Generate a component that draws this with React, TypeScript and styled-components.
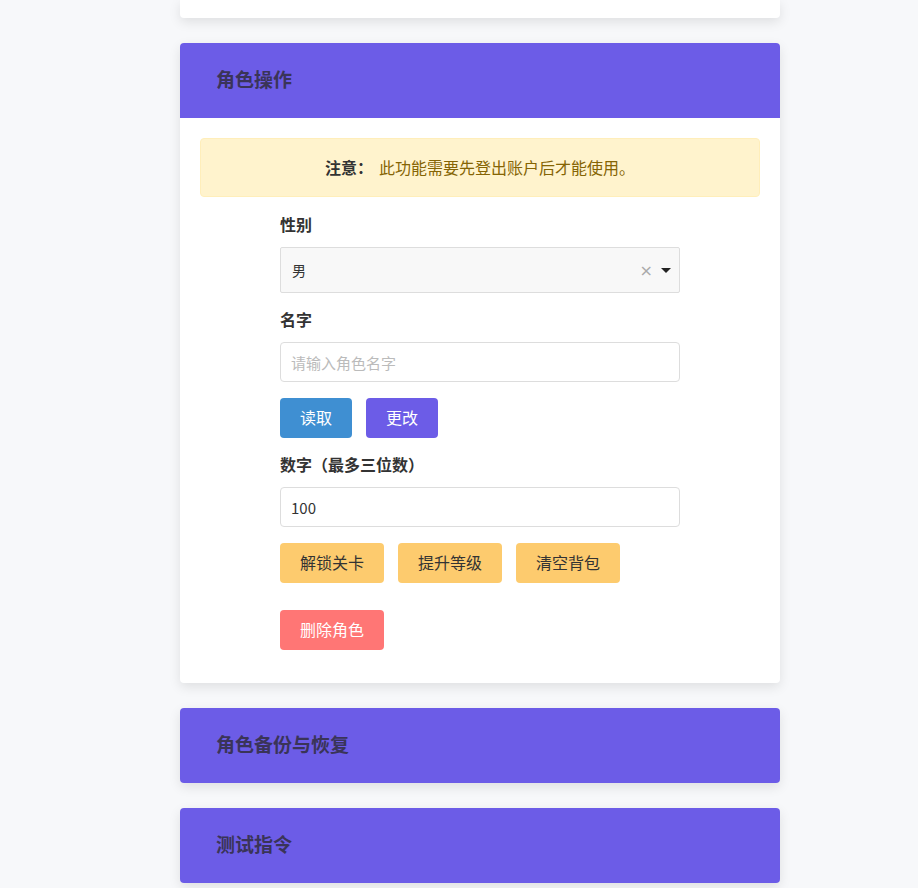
import styled, { createGlobalStyle } from 'styled-components';

const GlobalStyle = createGlobalStyle`
  body {
    margin: 0;
    background-color: #f7f8fa;
    font-family: "Microsoft YaHei", "Noto Sans CJK SC", "Noto Sans", sans-serif;
    color: #333;
  }
`;

const Page = styled.div`
  width: 600px;
  margin-left: 180px;
  display: flex;
  flex-direction: column;
  gap: 25px;
  padding-bottom: 40px;
`;

const Card = styled.section`
  background-color: white;
  border-radius: 4px;
  box-shadow: 0 4px 12px rgba(0, 0, 0, 0.1);
  overflow: hidden;
`;

const CardTail = styled.div`
  height: 18px;
  background-color: white;
  border-radius: 0 0 4px 4px;
  box-shadow: 0 4px 12px rgba(0, 0, 0, 0.1);
`;

const CardHeader = styled.div`
  background-color: #6c5ce7;
  height: 75px;
  box-sizing: border-box;
  display: flex;
  align-items: center;
  padding: 0 36px 4px;
`;

const CardTitle = styled.h2`
  margin: 0;
  font-size: 19px;
  font-weight: bold;
  color: #3a3458;
`;

const CardBody = styled.div`
  padding: 20px 20px 33px;
`;

const Alert = styled.div`
  background-color: #fff3cd;
  border: 1px solid #ffeeba;
  border-radius: 4px;
  height: 59px;
  box-sizing: border-box;
  display: flex;
  align-items: center;
  justify-content: center;
  font-size: 16px;
  color: #856404;
  margin-bottom: 17px;
  padding-bottom: 2px;

  strong {
    color: #333;
    margin-right: 6px;
  }
`;

const Form = styled.div`
  width: 400px;
  margin: 0 auto;
`;

const Label = styled.label`
  display: block;
  font-size: 16px;
  font-weight: bold;
  line-height: 20px;
  margin: 0 0 13px;
`;

const Group = styled.div`
  margin-bottom: 16px;
`;

const SelectBox = styled.div`
  height: 46px;
  box-sizing: border-box;
  border: 1px solid #ddd;
  border-radius: 2px;
  background-color: #f8f8f8;
  display: flex;
  align-items: center;
  padding: 0 8px 0 11px;
  font-size: 14px;
  color: #333;
`;

const SelectValue = styled.span`
  flex: 1;
`;

const Clear = styled.span`
  color: #aaa;
  font-size: 16px;
  font-family: "DejaVu Sans", sans-serif;
  margin-right: 8px;
`;

const Caret = styled.span`
  width: 0;
  height: 0;
  border-left: 5px solid transparent;
  border-right: 5px solid transparent;
  border-top: 5px solid #222;
`;

const Input = styled.input`
  display: block;
  width: 100%;
  height: 40px;
  box-sizing: border-box;
  border: 1px solid #ddd;
  border-radius: 4px;
  padding: 0 10px;
  font-size: 15px;
  font-family: inherit;
  color: #333;

  &::placeholder {
    color: #bbb;
  }
`;

const ButtonRow = styled.div<{ $mb?: number }>`
  display: flex;
  gap: 14px;
  margin-bottom: ${(p) => p.$mb ?? 16}px;
`;

const colors = {
  blue: ['#3f8fd2', '#fff'],
  purple: ['#6c5ce7', '#fff'],
  yellow: ['#fdcb6e', '#333'],
  red: ['#ff7675', '#fff'],
} as const;

const Button = styled.button<{ $kind: keyof typeof colors }>`
  height: 40px;
  padding: 0 20px 2px;
  border: none;
  border-radius: 4px;
  font-size: 16px;
  font-family: inherit;
  background-color: ${(p) => colors[p.$kind][0]};
  color: ${(p) => colors[p.$kind][1]};
  cursor: pointer;
`;

export default function App() {
  return (
    <>
      <GlobalStyle />
      <Page>
        <CardTail />
        <Card>
          <CardHeader>
            <CardTitle>角色操作</CardTitle>
          </CardHeader>
          <CardBody>
            <Alert>
              <strong>注意：</strong>此功能需要先登出账户后才能使用。
            </Alert>
            <Form>
              <Group>
                <Label>性别</Label>
                <SelectBox>
                  <SelectValue>男</SelectValue>
                  <Clear>×</Clear>
                  <Caret />
                </SelectBox>
              </Group>
              <Group>
                <Label>名字</Label>
                <Input placeholder="请输入角色名字" />
              </Group>
              <ButtonRow>
                <Button $kind="blue">读取</Button>
                <Button $kind="purple">更改</Button>
              </ButtonRow>
              <Group>
                <Label>数字（最多三位数）</Label>
                <Input defaultValue="100" />
              </Group>
              <ButtonRow $mb={27}>
                <Button $kind="yellow">解锁关卡</Button>
                <Button $kind="yellow">提升等级</Button>
                <Button $kind="yellow">清空背包</Button>
              </ButtonRow>
              <ButtonRow $mb={0}>
                <Button $kind="red">删除角色</Button>
              </ButtonRow>
            </Form>
          </CardBody>
        </Card>
        <Card>
          <CardHeader>
            <CardTitle>角色备份与恢复</CardTitle>
          </CardHeader>
        </Card>
        <Card>
          <CardHeader>
            <CardTitle>测试指令</CardTitle>
          </CardHeader>
        </Card>
      </Page>
    </>
  );
}
